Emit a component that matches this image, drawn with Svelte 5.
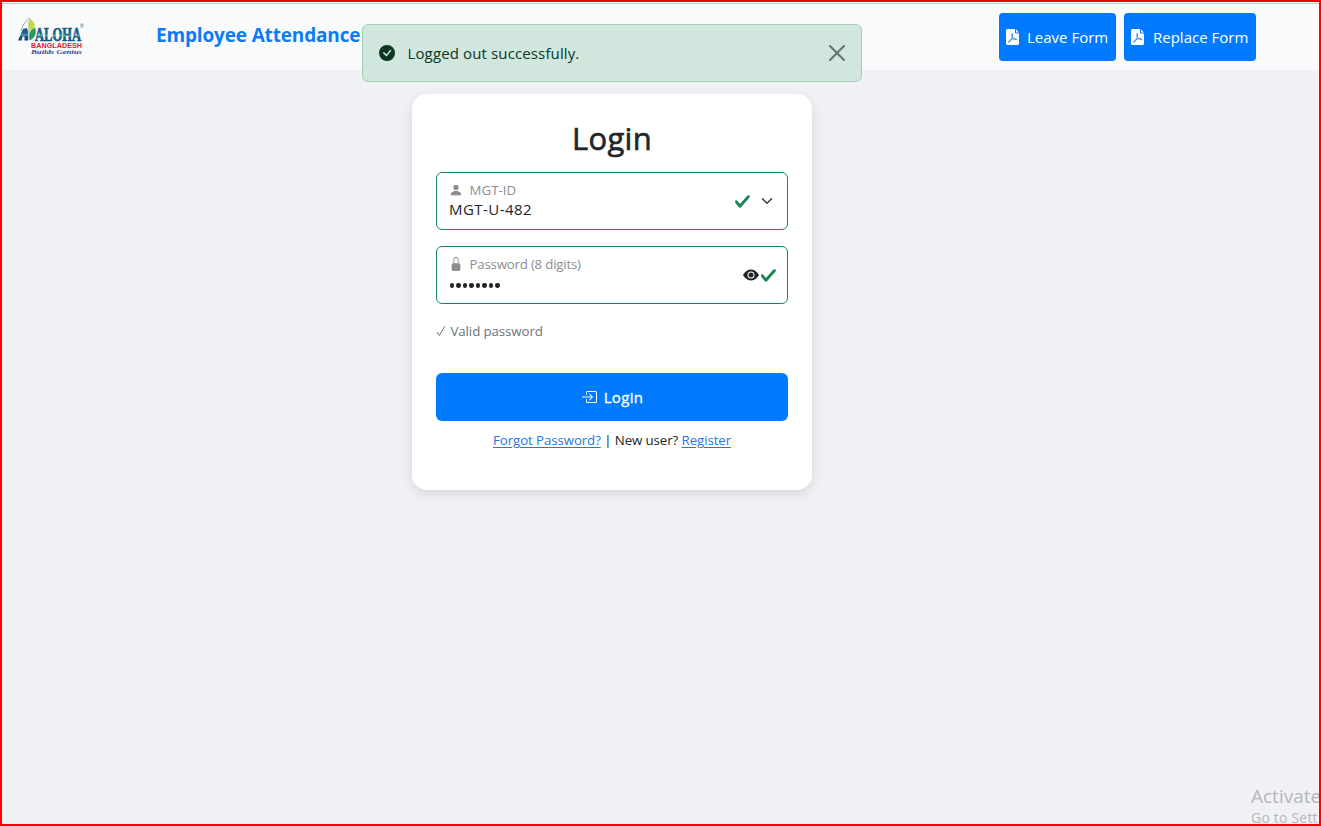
<script>
  let id = $state('MGT-U-482');
  let visible = $state(false);
</script>

<svelte:head><title>Employee Attendance</title></svelte:head>

{#snippet pdf()}
  <svg class="pdf" viewBox="0 0 14 16"><path fill="#fff" d="M2 0h7v3.2c0 .8.5 1.3 1.3 1.3H13V14.5c0 .9-.6 1.5-1.5 1.5h-10C.6 16 0 15.4 0 14.5V1.700C0 .6.7 0 2 0Zm8 .3L12.800 3.400H10Z"/><path d="M2.500 13c.7-2 4.100-3.700 7.500-3.300 1.100.2 1.100 1.200 0 1.100C7.900 10.500 6 8 5.600 5.500c-.2-1.400 1-1.500 1-.1C6.600 8.100 4.900 11.800 3.300 13.100c-.4.400-.9.300-.8-.1Z" fill="none" stroke="#277bd4" stroke-width=".8"/></svg>
{/snippet}
{#snippet tick()}
  <svg class="tick" viewBox="0 0 8 8"><path fill="#198754" d="M2.300 6.730.6 4.530c-.4-1.040.46-1.400 1.100-.8l1.100 1.400 3.400-3.800c.6-.63 1.600-.27 1.200.7l-4 4.600c-.43.5-.8.4-1.100.1z"/></svg>
{/snippet}

<div class="page">
  <header>
    <svg class="logo" viewBox="0 0 68 40">
      <defs><linearGradient id="sea" x1="0" y1="0" x2="0" y2="1"><stop offset="0" stop-color="#174b83"/><stop offset=".48" stop-color="#1d6e91"/><stop offset=".55" stop-color="#6fb4c4"/><stop offset=".65" stop-color="#155b78"/><stop offset="1" stop-color="#123e70"/></linearGradient></defs>
      <path fill="url(#sea)" d="M1 23.500 6 12l4-1 1 4v8.500H7.500v-4h-2l-1 4Z"/>
      <path fill="none" stroke="#5f9a9d" stroke-width=".8" d="M4 14C6 7 9 3 13 1.500M12 4v19"/>
      <path fill="#c9d83c" d="M13 1.500c5 4 7 9 1 13-3-4-3-8-1-13Z"/>
      <path fill="#2b9860" d="M13 23.500c-2-7 0-10 5-13 2 6 0 10-5 13Z"/>
      <text x="18" y="23.500" class="aloha" textLength="46" lengthAdjust="spacingAndGlyphs">ALOHA</text>
      <text x="63" y="11" class="reg">®</text>
      <text x="14" y="31" class="bangla" textLength="51" lengthAdjust="spacingAndGlyphs">BANGLADESH</text>
      <text x="14" y="37" class="genius" textLength="51" lengthAdjust="spacingAndGlyphs">Builds Genius</text>
    </svg>
    <h1>Employee Attendance</h1>
    <nav>
      <button class="leave">{@render pdf()}<span>Leave Form</span></button>
      <button class="replace">{@render pdf()}<span>Replace Form</span></button>
    </nav>
  </header>

  <main>
    <section class="card">
      <h2>Login</h2>
      <div class="field">
        <div class="content">
          <div class="label"><svg viewBox="0 0 16 16"><path d="M3 14s-1 0-1-1 1-4 6-4 6 3 6 4-1 1-1 1zm5-6a3 3 0 1 0 0-6 3 3 0 0 0 0 6"/></svg><span>MGT-ID</span></div>
          <div class="value">{id}</div>
        </div>
        <div class="state select">{@render tick()}<svg class="chevron" viewBox="0 0 16 16"><path d="m2 5 6 6 6-6" fill="none" stroke="#343a40" stroke-width="2" stroke-linecap="round" stroke-linejoin="round"/></svg></div>
      </div>
      <div class="field">
        <div class="content">
          <div class="label"><svg viewBox="0 0 16 16"><path d="M8 1a2 2 0 0 1 2 2v4H6V3a2 2 0 0 1 2-2m3 6V3a3 3 0 0 0-6 0v4a2 2 0 0 0-2 2v5a2 2 0 0 0 2 2h6a2 2 0 0 0 2-2V9a2 2 0 0 0-2-2"/></svg><span class="pw">Password (8 digits)</span></div>
          <div class="dots">{#each Array(8) as _}<i></i>{/each}</div>
        </div>
        <div class="state"><svg class="eye" viewBox="0 0 16 16" onclick={() => (visible = !visible)} role="presentation"><path d="M10.500 8a2.500 2.500 0 1 1-5 0 2.500 2.500 0 0 1 5 0"/><path d="M0 8s3-5.500 8-5.500S16 8 16 8s-3 5.500-8 5.500S0 8 0 8m8 3.500a3.500 3.500 0 1 0 0-7 3.500 3.500 0 0 0 0 7"/></svg>{@render tick()}</div>
      </div>
      <p class="valid"><svg viewBox="0 0 10 12"><path d="M.8 7 3.300 10.500 9 1" fill="none" stroke="#6c757d" stroke-width="1"/></svg><span>Valid password</span></p>
      <button class="login"><svg viewBox="0 0 16 16"><path fill-rule="evenodd" d="M6 3.500a.5.5 0 0 1 .5-.5h8a.5.5 0 0 1 .5.5v9a.5.5 0 0 1-.5.5h-8a.5.5 0 0 1-.5-.5v-2a.5.5 0 0 0-1 0v2A1.500 1.500 0 0 0 6.500 14h8a1.500 1.500 0 0 0 1.500-1.500v-9A1.500 1.500 0 0 0 14.500 2h-8A1.500 1.500 0 0 0 5 3.500v2a.5.5 0 0 0 1 0z"/><path d="M11.854 8.354a.5.5 0 0 0 0-.708l-3-3a.5.5 0 1 0-.708.708L10.293 7.500H1.500a.5.5 0 0 0 0 1h8.793l-2.147 2.146a.5.5 0 0 0 .708.708z"/></svg><span>Login</span></button>
      <p class="links"><a href="#forgot">Forgot Password?</a> | New user? <a href="#register">Register</a></p>
    </section>
  </main>

  <div class="alert" role="alert">
    <svg class="ok" viewBox="0 0 16 16"><path d="M16 8A8 8 0 1 1 0 8a8 8 0 0 1 16 0m-3.970-3.030a.75.75 0 0 0-1.080.022L7.477 9.417 5.384 7.323a.75.75 0 0 0-1.060 1.060L6.970 11.030a.75.75 0 0 0 1.079-.02l3.992-4.990a.75.75 0 0 0-.01-1.050z"/></svg>
    <span>Logged out successfully.</span>
    <svg class="close" viewBox="0 0 16 16"><path d="M.293.293a1 1 0 0 1 1.414 0L8 6.586 14.293.293a1 1 0 1 1 1.414 1.414L9.414 8l6.293 6.293a1 1 0 0 1-1.414 1.414L8 9.414l-6.293 6.293a1 1 0 0 1-1.414-1.414L6.586 8 .293 1.707a1 1 0 0 1 0-1.414z"/></svg>
  </div>
  <div class="watermark"><div>Activate</div><small>Go to Sett</small></div>
</div>

<style>
  * { box-sizing: border-box; }
  :global(body) { margin: 0; overflow: hidden; }
  .page { position: relative; width: 1321px; height: 826px; border: 2px solid #f00; border-top-color: #e60505; background: #f0f1f5; overflow: hidden; font-family: "Open Sans", "Noto Sans", sans-serif; font-size: 15px; color: #212529; }
  svg { display: block; flex: none; }
  h1, h2, p { margin: 0; }
  button { border: 0; padding: 0; font: inherit; color: #fff; background: #007bff; display: flex; align-items: center; }
  header { height: 68px; display: flex; background: #f8fafc; box-shadow: inset 0 1px #fff, inset 0 2px #c9cbcf; }
  .logo { width: 68px; height: 40px; margin: 15px 0 0 15px; overflow: visible; }
  .aloha { font: bold 18px "Liberation Serif", serif; fill: url(#sea); stroke: #185b80; stroke-width: .7; }
  .reg { font: 5px "Liberation Sans", sans-serif; fill: #345; }
  .bangla { font: bold 6.500px "Liberation Sans", sans-serif; fill: #e3202d; }
  .genius { font: italic bold 7px "Liberation Serif", serif; fill: #36458d; }
  h1 { margin: 19px 0 0 71px; width: 205px; font-size: 19px; line-height: 28px; font-weight: 700; letter-spacing: -.16px; color: #0d7bf2; white-space: nowrap; }
  nav { display: flex; gap: 8px; margin: 11px 63px 0 auto; }
  nav button { height: 48px; border-radius: 4px; padding-left: 7px; gap: 7px; white-space: nowrap; }
  nav button span { margin-top: -1px; }
  .leave { width: 117px; }
  .replace { width: 132px; }
  .replace { gap: 8px; }
  .pdf { width: 14px; height: 16px; }
  main { padding: 24px 0 0 410px; }
  .card { width: 400px; height: 396px; background: #fff; border-radius: 15px; box-shadow: 0 4px 12px rgba(0,0,0,.1); padding: 24px; }
  h2 { height: 54px; line-height: 40px; text-align: center; font-weight: 500; font-size: 31px; letter-spacing: .3px; -webkit-text-stroke: .6px #212529; }
  .field { height: 58px; border: 1px solid #198754; border-radius: 6px; display: flex; justify-content: space-between; margin-bottom: 16px; padding: 0 10px 0 12px; }
  .content { padding-top: 7px; }
  .label { display: flex; align-items: center; gap: 6.500px; height: 20px; font-size: 13.300px; color: #8b8e91; }
  .label svg { width: 14px; height: 14px; fill: #8b8e91; }
  .pw { letter-spacing: -.22px; }
  .value { line-height: 18px; letter-spacing: .45px; }
  .dots { display: flex; gap: 2.200px; padding-top: 9px; padding-left: 1px; }
  .dots i { width: 4.300px; height: 4.800px; background: #212529; border-radius: 50%; }
  .state { display: flex; align-items: center; gap: 1px; }
  .select { gap: 10px; padding-right: 4px; }
  .tick { width: 17px; height: 17px; }
  .chevron { width: 12px; height: 12px; }
  .eye { width: 16px; height: 16px; fill: #212529; }
  .valid { display: flex; gap: 4.500px; align-items: center; height: 22px; font-size: 13.300px; letter-spacing: -.1px; color: #6c757d; }
  .valid svg { width: 10px; height: 12px; }
  .login { width: 352px; height: 48px; justify-content: center; gap: 7px; margin-top: 31px; border-radius: 6px; font-weight: 500; }
  .login span { margin-top: -1px; letter-spacing: .35px; -webkit-text-stroke: .3px #fff; }
  .login svg { width: 16px; height: 16px; fill: #fff; }
  .links { margin-top: 9px; text-align: center; font-size: 13.300px; letter-spacing: -.1px; line-height: 20px; }
  a { color: #2379df; text-underline-offset: 2px; }
  .alert { position: absolute; left: 360px; top: 22px; width: 500px; height: 58px; border: 1px solid #a3cfbb; border-radius: 6px; background: #d1e7dd; display: flex; align-items: center; padding: 0 16px; color: #0a3622; }
  .alert span { margin-left: 12.500px; flex: 1; letter-spacing: .13px; }
  .ok { width: 16px; height: 16px; fill: #0a3622; }
  .close { width: 16px; height: 16px; fill: #000; opacity: .5; }
  .watermark { position: absolute; left: 1249px; top: 782px; color: #b6b7ba; white-space: nowrap; font-size: 19px; line-height: 24px; }
  .watermark small { display: block; font-size: 14px; line-height: 20px; letter-spacing: .2px; }
</style>
